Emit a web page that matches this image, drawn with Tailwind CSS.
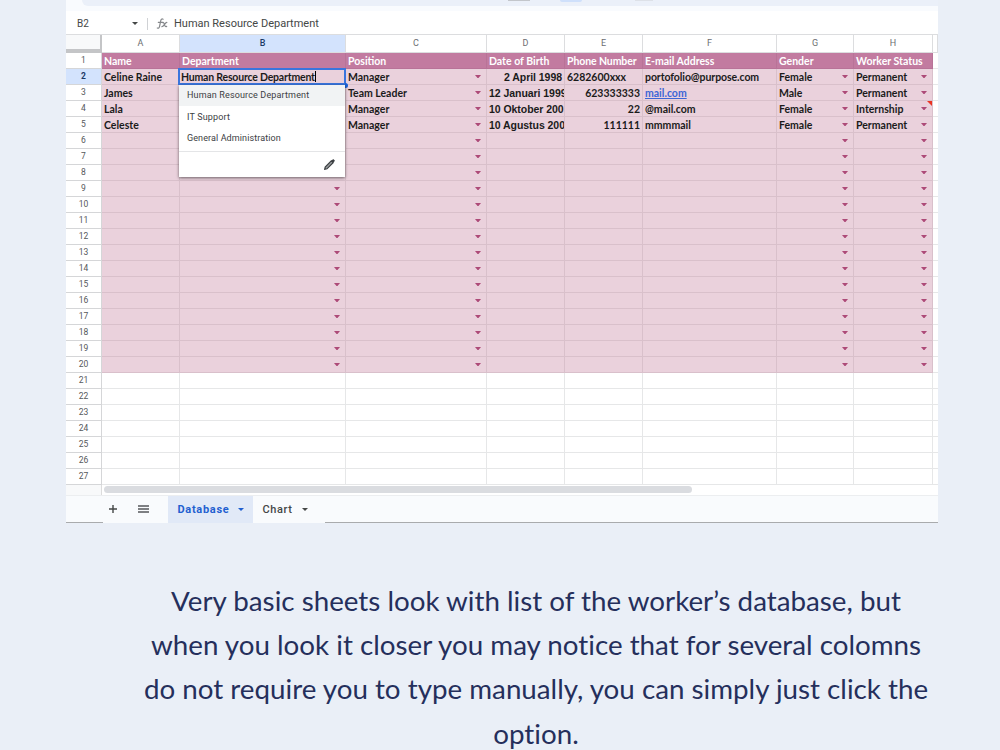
<!DOCTYPE html>
<html lang="en">
<head>
  <meta charset="UTF-8" />
  <meta name="viewport" content="width=device-width, initial-scale=1.0"/>
  <title>Worker Database</title>
  <script src="https://cdn.jsdelivr.net/npm/@tailwindcss/browser@4"></script>
</head>
<body class="bg-[#eaeff7] h-[750px] overflow-hidden font-['Lato',sans-serif]">

  <!-- Spreadsheet -->
  <div class="relative ml-[66px] w-[872px] h-[523px] bg-white flex flex-col overflow-hidden">
    <!-- Toolbar edge -->
    <div class="h-[11px] shrink-0 bg-[#f9fbfe]">
      <div class="ml-4 h-[6px] rounded-bl-lg bg-[#ebf0f9] flex items-start">
        <div class="ml-[426px] w-[22px] h-px bg-[#c3c6cb]"></div>
        <div class="ml-[30px] w-[22px] h-[2px] rounded-b bg-[#cfe0fb]"></div>
        <div class="ml-[53px] w-[18px] h-px bg-[#dde1e8]"></div>
      </div>
    </div>

    <!-- Formula bar -->
    <div class="h-[23px] shrink-0 flex items-center pt-[2px] font-['Roboto',sans-serif] text-[#444746]">
      <span class="ml-[11px] w-[55px] text-[10px]">B2</span>
      <svg class="w-[6px] h-[3px]" viewBox="0 0 6 3"><path d="M0 0h6L3 3z" fill="#444746"/></svg>
      <div class="ml-[9px] w-px h-3 bg-[#d0d2d5]"></div>
      <svg class="ml-[8px] w-[12px] h-[11px]" viewBox="0 0 11 11" fill="none" stroke="#85888b" stroke-width="1.2" stroke-linecap="round">
        <path d="M6.6 1.2C5.200.6 4.500 1.200 4.200 2.800L3 8.600C2.700 10 2 10.400.800 10M1.800 4.300h4M5.800 4.600c1.400-.6 1.700.4 2.200 2s.9 2.400 2.200 1.800M10.300 4.400C8.600 4.400 7.400 8.700 5.400 8.700"/>
      </svg>
      <span class="ml-[6px] mt-px text-[11px] whitespace-nowrap">Human Resource Department</span>
    </div>

    <!-- Column letters -->
    <div id="letters" class="h-[19px] shrink-0 grid grid-cols-[36px_78px_166px_141px_78px_78px_134px_77px_79px_5px] border-t border-[#dcdddf] font-['Roboto',sans-serif] text-[9px] text-[#6b6e71]"></div>

    <!-- Rows -->
    <div id="rows" class="h-[432px] shrink-0 overflow-hidden"></div>

    <!-- Horizontal scrollbar -->
    <div class="h-[10px] shrink-0 flex items-start">
      <div class="w-9 h-full bg-[#f8f9fa] border-r border-[#dcdcdc]"></div>
      <div class="ml-[2px] mt-px w-[588px] h-[7px] rounded-full bg-[#dadce0]"></div>
    </div>

    <!-- Sheet tabs -->
    <div class="grow bg-[#f9fbfd] border-t border-[#eceef0] flex font-['Roboto',sans-serif] text-[11px] font-medium text-[#444746]">
      <div class="w-[37px] border-b border-[#a9abad]"></div>
      <div class="w-[222px] flex items-center">
        <svg class="ml-[6px] mb-px w-2 h-2" viewBox="0 0 8 8"><path d="M4 0v8M0 4h8" stroke="#444746" stroke-width="1.4"/></svg>
        <svg class="ml-[21px] mb-px w-[11px] h-2" viewBox="0 0 11 8"><path d="M0 1h11M0 4h11M0 7h11" stroke="#55585b" stroke-width="1.500"/></svg>
        <div class="ml-[19px] w-[85px] h-full bg-[#e1e9f7] flex items-center text-[#1f5fd0]">
          <span class="ml-[9.5px] mt-px w-[60.5px] font-bold tracking-[0.7px]">Database</span>
          <svg class="w-[6px] h-[3px]" viewBox="0 0 6 3"><path d="M0 0h6L3 3z" fill="#1f5fd0"/></svg>
        </div>
        <span class="ml-[9.5px] mt-px w-[39.5px] tracking-[0.6px]">Chart</span>
        <svg class="w-[6px] h-[3px] shrink-0" viewBox="0 0 6 3"><path d="M0 0h6L3 3z" fill="#444746"/></svg>
      </div>
      <div class="grow border-b border-[#a9abad]"></div>
    </div>

    <!-- Active cell -->
    <div class="absolute left-[112px] top-[68px] w-[168px] h-[17px] border-2 border-[#3a75dd] bg-[#ead1dc] flex items-center text-[10.5px] font-bold text-[#1b1b1b] whitespace-nowrap">
      <span class="ml-[1px] mt-[2px] tracking-[-0.2px]">Human Resource Department</span><span class="w-px h-[11px] bg-black"></span>
    </div>
    <div class="absolute left-[279px] top-[83px] w-[3px] h-[5px] rounded-r-full bg-[#1a62d6]"></div>

    <!-- Dropdown -->
    <div class="absolute left-[113px] top-[85px] w-[166px] h-[92px] bg-white shadow-[0_1px_3px_rgba(0,0,0,0.55)] font-['Roboto',sans-serif] text-[9px] text-[#3c4043] tracking-[0.15px] flex flex-col">
      <div class="h-[21px] pl-2 flex items-center bg-[#f1f3f4]">Human Resource Department</div>
      <div class="h-[22px] pl-2 pt-px flex items-center">IT Support</div>
      <div class="h-[24px] pl-2 pb-px flex items-center border-b border-[#e4e5e7] tracking-[0.1px]">General Administration</div>
      <div class="grow flex items-center justify-end pr-[10px]">
        <svg class="w-[11px] h-[11px]" viewBox="0 0 11 11"><path d="M.7 10.300l.5-2.300L7.300 1.900l1.800 1.800L3 9.800z" fill="#9a9c9e" stroke="#3c4043" stroke-width="1.200"/><path d="M7 2.100L8.700.4c.4-.4.8-.3 1.100 0l.8.8c.3.3.4.7 0 1.100L8.900 4z" fill="#3c4043"/></svg>
      </div>
    </div>
  </div>

  <!-- Caption -->
  <p class="ml-[136px] mt-[56px] w-[800px] text-center text-[27.75px] leading-[44.2px] text-[#252f5c] whitespace-nowrap [font-variant-ligatures:none]">
    Very basic sheets look with list of the worker’s database, but<br>
    when you look it closer you may notice that for several colomns<br>
    do not require you to type manually, you can simply just click the<br>
    option.
  </p>

  <script>
    const headers = ["Name", "Department", "Position", "Date of Birth", "Phone Number", "E-mail Address", "Gender", "Worker Status"];
    const workers = [
      ["Celine Raine", "", "Manager", "2 April 1998", "6282600xxx", "portofolio@purpose.com", "Female", "Permanent"],
      ["James", "", "Team Leader", "12 Januari 1999", "623333333", "mail.com", "Male", "Permanent"],
      ["Lala", "", "Manager", "10 Oktober 200", "22", "@mail.com", "Female", "Internship"],
      ["Celeste", "", "Manager", "10 Agustus 200", "111111", "mmmmail", "Female", "Permanent"]
    ];
    const dropdownCols = [1, 2, 6, 7];
    const arrow = `<svg class="w-[6px] h-[3px] ml-auto mr-[3px] shrink-0" viewBox="0 0 6 3"><path d="M0 0h6L3.500 3h-1z" fill="#ad4a78"/></svg>`;

    let letters = `<div class="bg-[#f8f9fa] border-r-2 border-b-4 border-[#c4c5c7]"></div>`;
    ["A", "B", "C", "D", "E", "F", "G", "H", ""].forEach(l => {
      const active = l === "B" ? "bg-[#d3e3fd] text-[#1c3a66] font-medium" : "bg-white";
      letters += `<div class="${active} flex items-center justify-center pt-px border-r border-b border-[#dcdddf]">${l}</div>`;
    });
    document.getElementById("letters").innerHTML = letters;

    let html = "";
    for (let r = 1; r <= 27; r++) {
      const numClass = r === 2 ? "bg-[#d3e3fd] text-[#1c3a66] font-bold" : "bg-white text-[#55585b] font-normal";
      html += `<div class="h-4 grid grid-cols-[36px_78px_166px_141px_78px_78px_134px_77px_79px_5px] text-[10.5px] font-bold whitespace-nowrap">
        <div class="${numClass} flex items-center justify-center border-r border-b border-[#d5d6d8] font-['Roboto',sans-serif] text-[8.5px]">${r}</div>`;
      for (let c = 0; c < 8; c++) {
        let cls = "border-[#e6e7e8]";
        let text = "";
        if (r === 1) {
          cls = "bg-[#c27ba0] border-[#b87398] text-white";
          text = headers[c];
        } else if (r <= 20) {
          cls = "bg-[#ead1dc] border-[#d9c0cb] text-[#1b1b1b]";
          text = workers[r - 2] ? workers[r - 2][c] : "";
        }
        if (c === 3 && r > 1) cls += " font-['Liberation_Sans',sans-serif] tracking-[-0.05px]";
        if (c === 4 && r === 1) cls += " tracking-[-0.1px]";
        if (c === 5 && r === 2) cls += " tracking-[-0.08px]";
        if ((c === 3 && r === 2) || (c === 4 && r > 2)) cls += " justify-end";
        if (text === "mail.com") text = `<span class="text-[#3d66d6] underline">mail.com</span>`;
        const hasArrow = dropdownCols.includes(c) && r > 1 && r <= 20;
        const note = r === 4 && c === 7 ? `<svg class="absolute right-0 top-0 w-[5px] h-[5px]" viewBox="0 0 4 4"><path d="M0 0h4v4z" fill="#ea3323"/></svg>` : "";
        html += `<div class="${cls} relative flex items-center pl-[2px] pr-[2px] border-r border-b overflow-hidden"><span class="mt-[2px]">${text}</span>${hasArrow ? arrow : ""}${note}</div>`;
      }
      html += `<div class="border-b border-[#e6e7e8]"></div></div>`;
    }
    document.getElementById("rows").innerHTML = html;
  </script>
</body>
</html>
